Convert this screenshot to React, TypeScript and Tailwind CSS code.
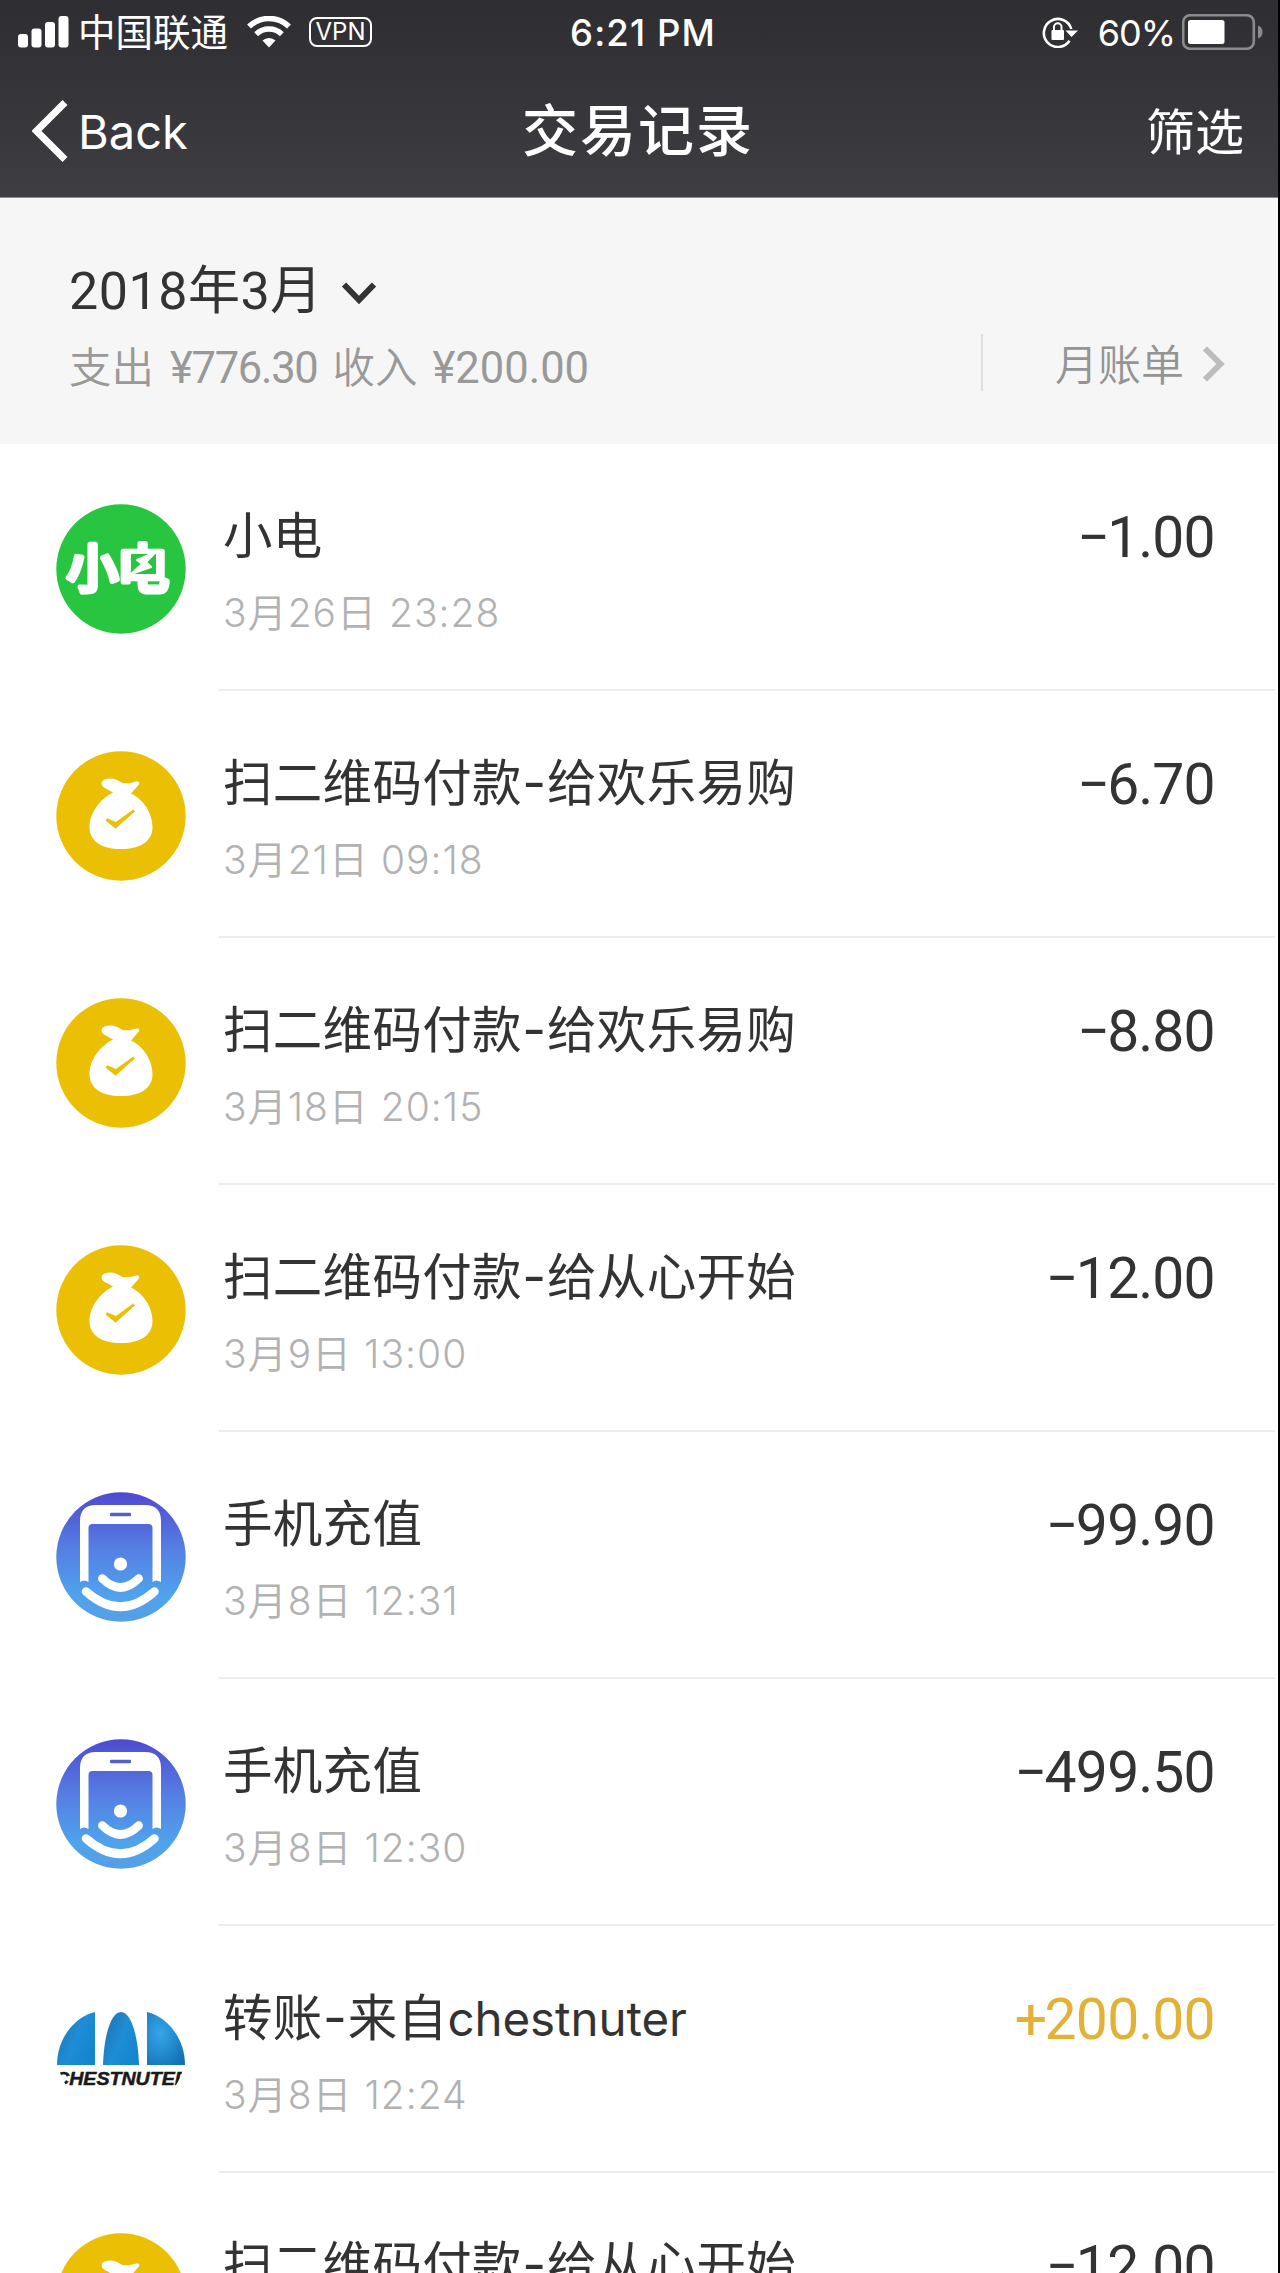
import React from "react";

const LATIN = "font-[Inter,'Noto_Sans_CJK_SC',sans-serif]";
const DIGITS = "font-[Roboto,'Noto_Sans_CJK_SC',sans-serif]";

function PowerIcon() {
  return (
    <svg viewBox="0 0 130 130" className="size-full">
      <circle cx="65" cy="65" r="64.7" fill="#27c540" />
      <g
        fill="#fff"
        stroke="#fff"
        strokeWidth="5"
        strokeLinejoin="round"
        strokeLinecap="round"
        fontFamily="'Noto Sans CJK SC', sans-serif"
        fontWeight="500"
        fontSize="52"
      >
        <text x="10.500" y="84">小</text>
        <text x="61" y="84">电</text>
      </g>
      <rect x="75" y="50" width="25" height="20" fill="#27c540" />
      <path d="M100 48 81 56l5 4-11 10 20-7-5-5z" fill="#fff" stroke="#fff" strokeWidth="2" strokeLinejoin="round" />
    </svg>
  );
}

function BagIcon() {
  return (
    <svg viewBox="0 0 130 130" className="size-full">
      <circle cx="65" cy="65" r="64.7" fill="#ebc004" />
      <path
        d="M57 41.5 48 36.5C44.500 34 45 30 48.500 28.600C55 26 61 28 65.500 31.500C70 33.500 76 31.500 80.500 30.500C83.500 30 84 32 82.500 34L75 42.500C87 48 96.500 62 96.500 76C96.500 90 85 98 65 98C45 98 33.500 90 33.500 76C33.500 62 44 48 57 41.500Z"
        fill="#fff"
      />
      <path d="M50.500 68.500 59.500 76 78 59.500 60 72.500z" fill="#ebc004" stroke="#ebc004" strokeWidth="2.600" strokeLinejoin="miter" />
    </svg>
  );
}

function PhoneIcon() {
  return (
    <svg viewBox="0 0 130 130" className="size-full">
      <defs>
        <linearGradient id="phoneSky" x1="0" y1="0" x2="0" y2="1">
          <stop offset="0" stopColor="#4f4ad0" />
          <stop offset="0.45" stopColor="#5580e4" />
          <stop offset="0.8" stopColor="#4fa3ec" />
          <stop offset="1" stopColor="#559fe6" />
        </linearGradient>
      </defs>
      <circle cx="65" cy="65" r="64.7" fill="url(#phoneSky)" />
      <path
        d="M24 90V29Q24 13 40 13H89Q105 13 105 29V90Q100 87 96.500 90V36Q96.500 32 92.500 32H36.500Q32.500 32 32.500 36V90Q28 87 24 90Z"
        fill="#fff"
      />
      <rect x="54" y="20.700" width="21" height="3.600" rx="1" fill="#5560c8" />
      <circle cx="64.500" cy="72" r="6.600" fill="#fff" />
      <path d="M46.300 86.500Q64.500 104.500 82.700 86.500" fill="none" stroke="#fff" strokeWidth="8.500" strokeLinecap="round" />
      <path d="M30 99.500Q64.500 130 98.500 99.500" fill="none" stroke="#fff" strokeWidth="8.500" strokeLinecap="round" />
    </svg>
  );
}

function ChestnuterIcon() {
  return (
    <svg viewBox="0 0 130 130" className="size-full">
      <defs>
        <clipPath id="avatarClip">
          <circle cx="65" cy="65" r="64.700" />
        </clipPath>
        <linearGradient id="domeL" x1="0" y1="0" x2="1" y2="0.600">
          <stop offset="0" stopColor="#1f6fae" />
          <stop offset="0.600" stopColor="#1d8ed6" />
          <stop offset="1" stopColor="#1585cd" />
        </linearGradient>
        <radialGradient id="domeR" cx="0.350" cy="0.400" r="0.800">
          <stop offset="0" stopColor="#35a6e8" />
          <stop offset="1" stopColor="#0f6fb2" />
        </radialGradient>
      </defs>
      <path d="M39 26V79H1C1 53 18 31 39 26Z" fill="url(#domeL)" />
      <path d="M47 79C48 49 55 26 65 26C75 26 82 49 83 79Z" fill="url(#domeL)" />
      <path d="M91 26V79H129C129 53 112 31 91 26Z" fill="url(#domeR)" />
      <g clipPath="url(#avatarClip)">
        <text
          x="-1"
          y="98.500"
          fontFamily="'Liberation Sans', sans-serif"
          fontSize="18.500"
          fontWeight="700"
          fontStyle="italic"
          fill="#1a1a1a"
          stroke="#1a1a1a"
          strokeWidth="0.500"
          textLength="134"
          lengthAdjust="spacingAndGlyphs"
        >
          CHESTNUTER
        </text>
      </g>
    </svg>
  );
}

const ICONS = { power: PowerIcon, bag: BagIcon, phone: PhoneIcon, chestnuter: ChestnuterIcon };

type Entry = {
  icon: keyof typeof ICONS;
  title: string;
  detail?: string;
  suffix?: string;
  date: string;
  sign: string;
  yuan: string;
  cents: string;
};

const ENTRIES: Entry[] = [
  { icon: "power", title: "小电", date: "3月26日 23:28", sign: "−", yuan: "1", cents: "00" },
  { icon: "bag", title: "扫二维码付款", detail: "给欢乐易购", date: "3月21日 09:18", sign: "−", yuan: "6", cents: "70" },
  { icon: "bag", title: "扫二维码付款", detail: "给欢乐易购", date: "3月18日 20:15", sign: "−", yuan: "8", cents: "80" },
  { icon: "bag", title: "扫二维码付款", detail: "给从心开始", date: "3月9日 13:00", sign: "−", yuan: "12", cents: "00" },
  { icon: "phone", title: "手机充值", date: "3月8日 12:31", sign: "−", yuan: "99", cents: "90" },
  { icon: "phone", title: "手机充值", date: "3月8日 12:30", sign: "−", yuan: "499", cents: "50" },
  { icon: "chestnuter", title: "转账", detail: "来自", suffix: "chestnuter", date: "3月8日 12:24", sign: "+", yuan: "200", cents: "00" },
  { icon: "bag", title: "扫二维码付款", detail: "给从心开始", date: "3月8日 12:20", sign: "−", yuan: "12", cents: "00" },
];

function Row({ entry }: { entry: Entry }) {
  const Icon = ICONS[entry.icon];
  const income = entry.sign === "+";
  return (
    <li className="flex h-[247px] shrink-0 pl-14">
      <div className="mt-[60px] size-[130px] shrink-0">
        <Icon />
      </div>
      <div className="ml-[33px] mr-[3px] flex flex-1 justify-between border-b-2 border-[#ececec] pl-[4px] pr-[60px]">
        <div className="pt-[62px] whitespace-nowrap">
          <div className={`${LATIN} h-[60px] text-[49.5px] leading-[60px] tracking-[0.3px] text-[#333]`}>
            {entry.title}
            {entry.detail && <span className="mx-[0.5px] text-[52px] leading-none">-</span>}
            {entry.detail}
            {entry.suffix && <span className="text-[47.5px] leading-none tracking-[-0.1px]">{entry.suffix}</span>}
          </div>
          <div className={`${LATIN} mt-[23px] h-12 text-[39px] font-[350] leading-[48px] tracking-[1px] text-[#b2b2b2]`}>
            {entry.date}
          </div>
        </div>
        <div
          className={`${DIGITS} mt-[64px] flex h-[60px] text-[57px] leading-[60px] tracking-[-0.6px] whitespace-nowrap ${
            income ? "text-[#e2b135]" : "text-[#333]"
          }`}
        >
          <span className="mr-[-2px]">{entry.sign}</span>
          <span>{entry.yuan}</span>
          <span className="mx-[-0.5px]">.</span>
          <span>{entry.cents}</span>
        </div>
      </div>
    </li>
  );
}

export default function App() {
  return (
    <div className="flex h-[2273px] w-[1280px] flex-col overflow-hidden border-r-2 border-black bg-white">
      <header className="h-[198px] shrink-0 border-b border-[#8a8a8c] bg-linear-to-b from-[#2e2d32] to-[#3e3d41] text-white">
        <div className="flex h-[64px] items-center">
          <div className="flex flex-1 items-center pl-[18px]">
            <svg viewBox="0 0 51 32" className="h-8 w-[51px]" fill="#fff">
              <rect x="0" y="18" width="10" height="13.500" rx="3" />
              <rect x="13.500" y="12.500" width="10" height="19" rx="3" />
              <rect x="27" y="6" width="10" height="25.500" rx="3" />
              <rect x="40.500" y="0" width="10" height="31.500" rx="3" />
            </svg>
            <span className={`${LATIN} ml-[9px] pt-[2px] text-[37.5px] leading-[44px]`}>中国联通</span>
            <svg viewBox="0 0 44 32" className="ml-[19px] h-8 w-11">
              <g fill="none" stroke="#fff" strokeWidth="5.600">
                <path d="M2 10.500A29 29 0 0 1 42 10.500" />
                <path d="M9.200 18.200A18.500 18.500 0 0 1 34.800 18.200" />
              </g>
              <path d="M15.500 24.500A9.500 9.500 0 0 1 28.500 24.500L22 31.500Z" fill="#fff" />
            </svg>
            <span className={`${LATIN} ml-[18px] flex h-[30px] w-[63px] items-center justify-center rounded-[8px] border-2 border-white text-[24px] leading-none`}>
              VPN
            </span>
          </div>
          <span className={`${LATIN} pl-1 pt-px text-[36.500px] font-medium leading-[44px] tracking-[1.1px]`}>6:21 PM</span>
          <div className="flex flex-1 items-center justify-end pr-[14px]">
            <svg viewBox="0 0 36 32" className="h-8 w-9" fill="none" stroke="#fff">
              <path d="M27.500 24.800A14 14 0 1 1 29.300 13" strokeWidth="2.600" />
              <path d="M23.500 14.500H36L29.500 21Z" fill="#fff" stroke="none" />
              <rect x="9.500" y="14" width="12.500" height="10" rx="1" fill="#fff" stroke="none" />
              <path d="M12 14V11A3.700 3.700 0 0 1 19.500 11V14" strokeWidth="2" />
            </svg>
            <span className={`${LATIN} ml-5 pt-px text-[36px] leading-[44px] tracking-[-1px]`}>60%</span>
            <svg viewBox="0 0 82 36" className="ml-[7px] h-9 w-[82px]">
              <rect x="1.200" y="1.200" width="70.600" height="33.600" rx="7" fill="none" stroke="#8b8a8d" strokeWidth="2.600" />
              <rect x="6" y="6" width="36.500" height="24" rx="2.500" fill="#fff" />
              <path d="M76 11.500Q80.500 13 80.500 18T76 24.500Z" fill="#8b8a8d" />
            </svg>
          </div>
        </div>
        <div className="flex h-[133px] items-start pt-[35px]">
          <div className="flex flex-1 items-center pl-8">
            <svg viewBox="0 0 36 62" className="h-[62px] w-9">
              <path d="M33 2.500 4.500 31 33 59.500" fill="none" stroke="#fff" strokeWidth="7" />
            </svg>
            <span className={`${LATIN} ml-[10px] pt-[2px] text-[47px] leading-[62px]`}>Back</span>
          </div>
          <span className={`${LATIN} pt-px text-[56px] font-medium leading-[62px] tracking-[2px]`}>交易记录</span>
          <div className="flex flex-1 justify-end pr-[34px]">
            <span className={`${LATIN} pt-[3px] text-[49px] leading-[62px]`}>筛选</span>
          </div>
        </div>
      </header>

      <section className="flex h-[246px] shrink-0 justify-between bg-[#f6f6f6] pl-[69px] pr-[52px]">
        <div className="whitespace-nowrap pt-[64px]">
          <div className="flex h-[60px] items-center">
            <span className={`${DIGITS} text-[52px] leading-[60px] tracking-[0.5px] text-[#333]`}>2018年3月</span>
            <svg viewBox="0 0 36 24" className="ml-[18px] mt-0.5 h-6 w-9">
              <path d="M3 3.500 18 19 33 3.500" fill="none" stroke="#333" strokeWidth="6" />
            </svg>
          </div>
          <div className={`${DIGITS} mt-[21px] flex items-baseline text-[42.500px] leading-[52px] text-[#999]`}>
            <span className="font-[350]">支出</span>
            <span className="ml-[16px] text-[43.500px] tracking-[-1.3px]">¥776.30</span>
            <span className="ml-[15px] font-[350]">收入</span>
            <span className="ml-[15px] text-[43.500px]">¥200.00</span>
          </div>
        </div>
        <div className="mt-[136px] flex h-[57px] items-center border-l-2 border-[#dedede]">
          <span className={`${LATIN} ml-[72px] pt-[4px] text-[43px] font-[350] leading-[56px] text-[#949494]`}>月账单</span>
          <svg viewBox="0 0 24 36" className="ml-[18px] mt-[3px] h-9 w-6">
            <path d="M3 2.500 18.500 18 3 33.500" fill="none" stroke="#bdbdbd" strokeWidth="6" />
          </svg>
        </div>
      </section>

      <ul className="flex flex-col">
        {ENTRIES.map((entry, i) => (
          <Row key={i} entry={entry} />
        ))}
      </ul>
    </div>
  );
}
